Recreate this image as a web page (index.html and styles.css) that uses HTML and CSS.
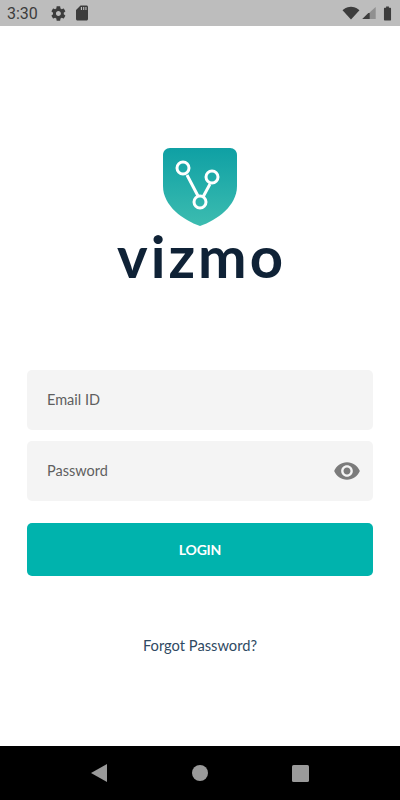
FILE: index.html
```html
<!DOCTYPE html>
<html lang="en">
<head>
  <meta charset="UTF-8" />
  <meta name="viewport" content="width=device-width, initial-scale=1.0"/>
  <title>vizmo</title>
  <link rel="stylesheet" href="styles.css">
</head>
<body>
  <div class="status-bar">
    <span class="clock">3:30</span>
    <svg class="status-icon gear" viewBox="0 0 24 24"><path d="M19.4 13c.04-.33.06-.66.06-1s-.02-.67-.06-1l2.15-1.68c.2-.15.25-.42.12-.64l-2.03-3.52c-.12-.22-.4-.3-.62-.22l-2.53 1.02c-.53-.4-1.1-.74-1.72-1l-.38-2.69C14.35 2.04 14.14 1.85 13.9 1.85h-4.06c-.25 0-.46.19-.5.42l-.38 2.69c-.62.26-1.19.6-1.72 1L4.7 4.94c-.23-.09-.5 0-.62.22L2.05 8.68c-.13.22-.08.49.12.64L4.32 11c-.04.33-.07.67-.07 1s.03.67.07 1l-2.15 1.68c-.2.15-.25.42-.12.64l2.03 3.52c.12.22.39.3.62.22l2.53-1.02c.53.4 1.1.74 1.72 1l.38 2.69c.04.23.25.42.5.42h4.06c.24 0 .45-.19.49-.42l.38-2.69c.62-.26 1.19-.6 1.72-1l2.53 1.02c.23.09.5 0 .62-.22l2.03-3.52c.13-.22.08-.49-.12-.64L19.4 13zM11.87 15.5c-1.93 0-3.5-1.57-3.5-3.5s1.57-3.5 3.5-3.5 3.5 1.57 3.5 3.5-1.57 3.5-3.5 3.5z"/></svg>
    <svg class="status-icon card" viewBox="0 0 24 24"><path d="M18 2h-8L4 8v12c0 1.1.9 2 2 2h12c1.1 0 2-.9 2-2V4c0-1.1-.9-2-2-2zM12 8h-1.500V4H12v4zm3 0h-1.500V4H15v4zm3 0h-1.500V4H18v4z"/></svg>
    <span class="status-spacer"></span>
    <svg class="status-icon wifi" viewBox="0 0 24 24"><path d="M12 20.500L.7 8.200C1.500 7.500 5.700 3.500 12 3.500s10.500 4 11.300 4.700z"/></svg>
    <svg class="status-icon signal" viewBox="0 0 24 24"><path class="signal-dim" d="M22 3v18H2z"/><path d="M13 12v9H2l9-9z"/></svg>
    <svg class="status-icon battery" viewBox="0 0 24 24"><path d="M15.700 4H14V2h-4v2H8.300C7.600 4 7 4.600 7 5.300v15.300C7 21.400 7.600 22 8.300 22h7.300c.8 0 1.400-.6 1.400-1.300V5.300C17 4.600 16.400 4 15.700 4z"/></svg>
  </div>

  <main class="screen">
    <div class="brand">
      <svg class="shield" viewBox="0 0 74 78">
        <defs>
          <linearGradient id="shieldFill" x1="0" y1="0" x2="0" y2="1">
            <stop offset="0" stop-color="#0fa0a4"/>
            <stop offset="1" stop-color="#3cbcb0"/>
          </linearGradient>
        </defs>
        <path fill="url(#shieldFill)" d="M7 0H67C71 0 74 3 74 7V38C74 58 54 72 37 78C20 72 0 58 0 38V7C0 3 3 0 7 0Z"/>
        <g fill="none" stroke="#fff" stroke-width="3">
          <path d="M24 27L35 48M47 36L40 49"/>
          <circle cx="20" cy="20" r="6"/>
          <circle cx="49" cy="29" r="6"/>
          <circle cx="37" cy="54" r="6"/>
        </g>
      </svg>
      <div class="wordmark">vizmo</div>
    </div>

    <form class="login-form">
      <div class="field"><span class="placeholder">Email ID</span></div>
      <div class="field">
        <span class="placeholder">Password</span>
        <svg class="eye" viewBox="0 0 24 24"><path d="M12 4.500C7 4.500 2.730 7.610 1 12c1.730 4.390 6 7.500 11 7.500s9.270-3.110 11-7.500c-1.730-4.390-6-7.500-11-7.500zM12 17c-2.760 0-5-2.240-5-5s2.240-5 5-5 5 2.240 5 5-2.240 5-5 5zm0-8c-1.660 0-3 1.340-3 3s1.340 3 3 3 3-1.340 3-3-1.340-3-3-3z"/></svg>
      </div>
      <button class="login-btn" type="button">LOGIN</button>
    </form>

    <a class="forgot">Forgot Password?</a>
  </main>

  <div class="nav-bar">
    <svg class="nav-icon back" viewBox="0 0 16 18"><path d="M16 0V18L0 9Z"/></svg>
    <svg class="nav-icon" viewBox="0 0 16 16"><circle cx="8" cy="8" r="8"/></svg>
    <svg class="nav-icon square" viewBox="0 0 16 16"><rect width="16" height="16" rx="1.500"/></svg>
  </div>
</body>
</html>
```

FILE: styles.css
```css
* {
  margin: 0;
  padding: 0;
  box-sizing: border-box;
}
html, body {
  height: 100%;
  overflow: hidden;
}
body {
  display: flex;
  flex-direction: column;
  background: #fff;
  font-family: 'Lato', sans-serif;
}

/* status bar */
.status-bar {
  height: 26px;
  flex: none;
  display: flex;
  align-items: center;
  padding: 0 4px 0 7px;
  background: #bdbdbd;
  color: #3c3c3c;
}
.clock {
  font-family: 'Roboto', sans-serif;
  font-size: 16px;
  margin-right: 12px;
}
.status-icon {
  fill: #3c3c3c;
  flex: none;
}
.gear {
  width: 17px;
  height: 17px;
  margin-right: 6px;
}
.card {
  width: 18px;
  height: 18px;
}
.status-spacer {
  flex: 1;
}
.wifi {
  width: 18px;
  height: 18px;
  margin-right: 1px;
}
.signal {
  width: 16px;
  height: 16px;
  margin-right: 2px;
}
.signal-dim {
  opacity: 0.35;
}
.battery {
  width: 17px;
  height: 17px;
}

/* main */
.screen {
  flex: 1;
  display: flex;
  flex-direction: column;
  align-items: center;
  padding: 122px 27px 0;
}
.brand {
  display: flex;
  flex-direction: column;
  align-items: center;
}
.shield {
  width: 74px;
  height: 78px;
}
.wordmark {
  font-family: 'Lato', sans-serif;
  font-size: 58px;
  font-weight: 700;
  line-height: 56px;
  letter-spacing: 3px;
  color: #0f2236;
  margin: 2px 0 0 3px;
}
.login-form {
  width: 100%;
  margin-top: 86px;
  display: flex;
  flex-direction: column;
  gap: 11px;
}
.field {
  height: 60px;
  display: flex;
  align-items: center;
  justify-content: space-between;
  padding: 0 12px 0 20px;
  background: #f4f4f4;
  border-radius: 5px;
}
.placeholder {
  font-size: 14.500px;
  margin-bottom: 2px;
  color: #5f5f5f;
}
.eye {
  width: 28px;
  height: 28px;
  fill: #7b7b7b;
}
.login-btn {
  height: 53px;
  margin-top: 11px;
  border: none;
  border-radius: 5px;
  background: #00b3ad;
  color: #fff;
  font-family: 'Lato', sans-serif;
  font-size: 14px;
  font-weight: 700;
  letter-spacing: -0.200px;
}
.forgot {
  margin-top: 60px;
  font-size: 14.700px;
  color: #2f4a63;
}

/* nav bar */
.nav-bar {
  height: 54px;
  flex: none;
  display: flex;
  align-items: center;
  justify-content: space-between;
  padding: 0 91px;
  background: #000;
}
.nav-icon {
  width: 16px;
  height: 16px;
  fill: #9a9a9a;
}
.back {
  height: 18px;
}
.square {
  width: 17px;
  height: 17px;
}
```
